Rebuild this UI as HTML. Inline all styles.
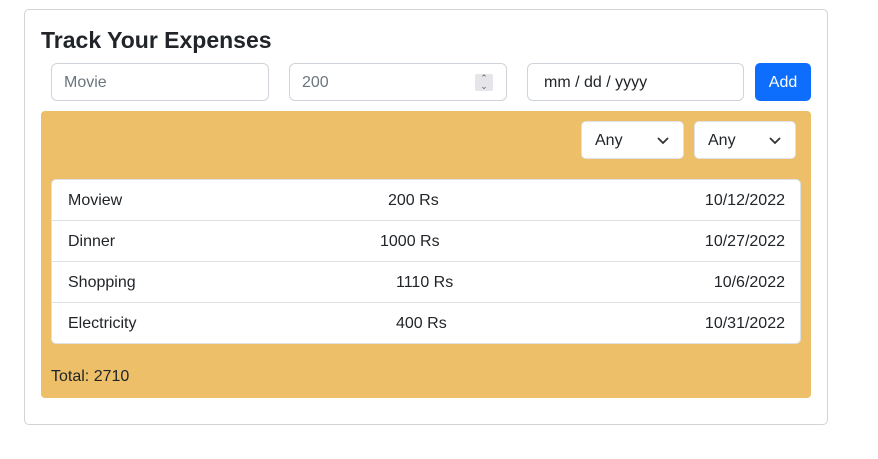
<!DOCTYPE html><html><head><style>
body{margin:0;background:#fff;font-family:"Liberation Sans",sans-serif;color:#212529;}
.card{position:absolute;left:24px;top:9px;width:802px;height:414px;border:1px solid #d3d3d6;border-radius:5px;}
h1{position:absolute;left:41px;top:27px;margin:0;font-size:23px;font-weight:bold;}
.in{position:absolute;top:63px;height:36px;border:1px solid #ced4da;border-radius:6px;font-size:16px;line-height:38px;padding-left:12px;box-sizing:content-box;}
.ph{color:#6c757d}
.btn{position:absolute;left:755px;top:63px;width:56px;height:38px;background:#0d6efd;color:#fff;border-radius:5px;text-align:center;line-height:39px;font-size:16px;}
.panel{position:absolute;left:41px;top:111px;width:770px;height:287px;background:#ecbf68;border-radius:4px;}
.sel{position:absolute;top:121px;background:#fff;border:1px solid #dee2e6;border-radius:5px;font-size:16px;line-height:38px;padding-left:13px;box-sizing:border-box;height:38px;}
.sel svg{position:absolute;right:14px;top:15px}
.list{position:absolute;left:51px;top:179px;width:748px;height:163px;background:#fff;border:1px solid #dee2e6;border-radius:5px;}
.row{position:relative;height:41px;border-bottom:1px solid #dee2e6;font-size:16px;line-height:41px;box-sizing:border-box}
.row:last-child{border-bottom:none}
.row span{position:absolute}
.n{left:16px}.d{right:15px}
.total{position:absolute;left:51px;top:368px;font-size:16px;}
</style></head><body>
<div class="card"></div>
<h1>Track Your Expenses</h1>
<div class="in ph" style="left:51px;width:204px">Movie</div>
<div class="in ph" style="left:289px;width:204px">200<span style="position:absolute;right:13px;top:10px;width:18px;height:17px;background:#e6e6ea;border-radius:2px;font-size:9px;line-height:8px;text-align:center;color:#666">⌃<br>⌄</span></div>
<div class="in" style="left:527px;width:204px;padding-left:16px;box-sizing:border-box;width:217px;height:38px;line-height:37px">mm / dd / yyyy</div>
<div class="btn">Add</div>
<div class="panel"></div>
<div class="sel" style="left:581px;width:103px">Any<svg width="12" height="8" viewBox="0 0 12 8"><path d="M1 1l5 5 5-5" fill="none" stroke="#333" stroke-width="1.8"/></svg></div>
<div class="sel" style="left:694px;width:102px">Any<svg width="12" height="8" viewBox="0 0 12 8"><path d="M1 1l5 5 5-5" fill="none" stroke="#333" stroke-width="1.8"/></svg></div>
<div class="list">
<div class="row"><span class="n">Moview</span><span style="left:336px">200 Rs</span><span class="d">10/12/2022</span></div>
<div class="row"><span class="n">Dinner</span><span style="left:328px">1000 Rs</span><span class="d">10/27/2022</span></div>
<div class="row"><span class="n">Shopping</span><span style="left:344px">1110 Rs</span><span class="d">10/6/2022</span></div>
<div class="row"><span class="n">Electricity</span><span style="left:344px">400 Rs</span><span class="d">10/31/2022</span></div>
</div>
<div class="total">Total: 2710</div>
</body></html>
